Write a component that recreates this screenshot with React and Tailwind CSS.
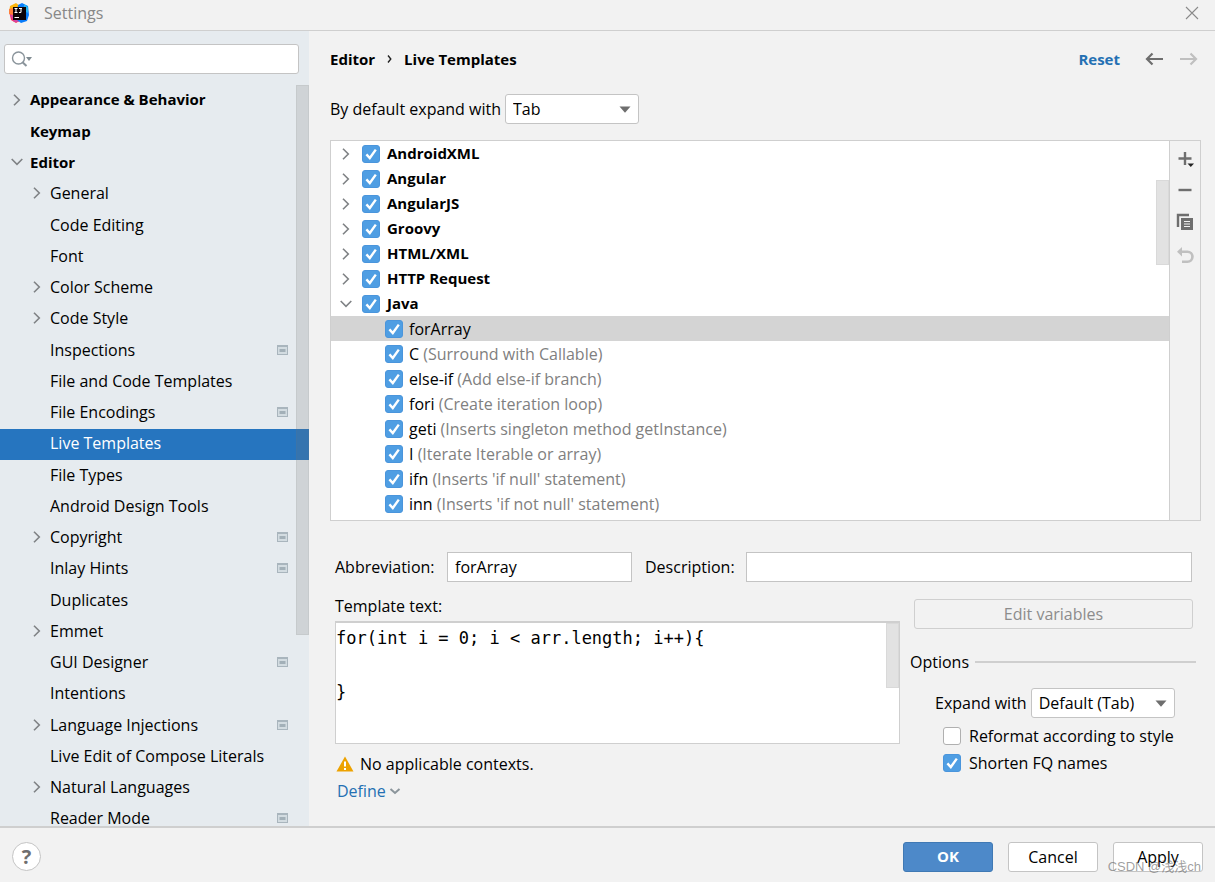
import React, { useState } from 'react';

const SETTINGS_TREE = [
  { label: 'Appearance & Behavior', level: 0, arrow: 'right' },
  { label: 'Keymap', level: 0 },
  { label: 'Editor', level: 0, arrow: 'down' },
  { label: 'General', level: 1, arrow: 'right' },
  { label: 'Code Editing', level: 1 },
  { label: 'Font', level: 1 },
  { label: 'Color Scheme', level: 1, arrow: 'right' },
  { label: 'Code Style', level: 1, arrow: 'right' },
  { label: 'Inspections', level: 1, project: true },
  { label: 'File and Code Templates', level: 1 },
  { label: 'File Encodings', level: 1, project: true },
  { label: 'Live Templates', level: 1 },
  { label: 'File Types', level: 1 },
  { label: 'Android Design Tools', level: 1 },
  { label: 'Copyright', level: 1, arrow: 'right', project: true },
  { label: 'Inlay Hints', level: 1, project: true },
  { label: 'Duplicates', level: 1 },
  { label: 'Emmet', level: 1, arrow: 'right' },
  { label: 'GUI Designer', level: 1, project: true },
  { label: 'Intentions', level: 1 },
  { label: 'Language Injections', level: 1, arrow: 'right', project: true },
  { label: 'Live Edit of Compose Literals', level: 1 },
  { label: 'Natural Languages', level: 1, arrow: 'right' },
  { label: 'Reader Mode', level: 1, project: true },
];

const GROUPS = ['AndroidXML', 'Angular', 'AngularJS', 'Groovy', 'HTML/XML', 'HTTP Request', 'Java'];

const TEMPLATES = [
  { name: 'forArray' },
  { name: 'C', hint: '(Surround with Callable)' },
  { name: 'else-if', hint: '(Add else-if branch)' },
  { name: 'fori', hint: '(Create iteration loop)' },
  { name: 'geti', hint: '(Inserts singleton method getInstance)' },
  { name: 'I', hint: '(Iterate Iterable or array)' },
  { name: 'ifn', hint: "(Inserts 'if null' statement)" },
  { name: 'inn', hint: "(Inserts 'if not null' statement)" },
];

function Chevron({ dir }) {
  return (
    <svg width="12" height="12" viewBox="0 0 12 12" fill="none" stroke="#7f8285" strokeWidth="1.6">
      {dir === 'down' ? <path d="M0.7 3 6 8.3 11.3 3" /> : <path d="M3 0.7 8.3 6 3 11.3" />}
    </svg>
  );
}

function Checkbox({ id, defaultChecked }) {
  return (
    <span className="relative flex size-[18px] shrink-0">
      <input
        id={id}
        type="checkbox"
        defaultChecked={defaultChecked}
        className="peer size-[18px] appearance-none rounded-[3px] border border-[#b0b0b0] bg-white checked:border-[#4a95dc] checked:bg-[#4f9ee3]"
      />
      <svg className="pointer-events-none absolute inset-0 hidden peer-checked:block" width="18" height="18" viewBox="0 0 18 18" fill="none" stroke="#fff" strokeWidth="2.4">
        <path d="M4.4 9.4 7.8 13 13.8 4.6" />
      </svg>
    </span>
  );
}

function Select({ id, className, options }) {
  return (
    <span className={`relative block ${className}`}>
      <select id={id} className="h-[30px] w-full appearance-none rounded-[3px] border border-[#c4c4c4] bg-white pl-[7px]">
        {options.map((option) => (
          <option key={option}>{option}</option>
        ))}
      </select>
      <svg className="pointer-events-none absolute top-3 right-2" width="12" height="7" viewBox="0 0 12 7">
        <path d="M0.5 0.5h11L6 6.8z" fill="#6e6e6e" />
      </svg>
    </span>
  );
}

function Logo() {
  return (
    <svg width="20" height="20" viewBox="0 0 20 20">
      <path d="M1 3 7 0 11 3 8 10 0 11z" fill="#fdb60d" />
      <path d="M0 8 5 7 12 17 7 20 2 17z" fill="#fe2857" />
      <path d="M1 12 6 10 10 19 5 19z" fill="#d4459c" />
      <path d="M9 2 13 0 19 3 20 12 18 18 12 20 8 17z" fill="#087cfa" />
      <path d="M15 1 19 4 19 10 15 8z" fill="#21b5f5" />
      <path d="M0 6 4 5 4 12 0 11z" fill="#ff7f3a" />
      <rect x="4" y="4" width="13" height="13" fill="#0b0306" />
      <path d="M5.5 5.5h3M7 5.5v4M5.5 9.5h3M10 5.5h3M12 5.5v3.2q0 1-2 .8" stroke="#fff" strokeWidth="1.1" fill="none" />
      <path d="M5.5 14.5h4.5" stroke="#fff" strokeWidth="1" />
    </svg>
  );
}

function ProjectIcon() {
  return (
    <svg width="11" height="10" viewBox="0 0 11 10">
      <path d="M0 0h11v10H0z" fill="#a9b5bd" />
      <path d="M1 2h9v7H1z" fill="#d3dce1" />
      <path d="M2.5 4h6v3h-6z" fill="#a3b0b8" />
    </svg>
  );
}

function Sidebar({ selected, onSelect }) {
  return (
    <aside className="flex w-[309px] shrink-0 flex-col bg-[#e6ebef]">
      <div className="pt-[13px] pr-[10px] pb-[11px] pl-1">
        <label className="flex h-[30px] items-center rounded-[3px] border border-[#c4c4c4] bg-white pl-[6px]">
          <svg width="22" height="18" viewBox="0 0 22 18" fill="none" stroke="#8a949b" strokeWidth="1.4">
            <circle cx="7.5" cy="8" r="6" />
            <path d="M11.5 12.2 15.5 16" strokeWidth="2" />
            <path d="M15 7h6l-3 4z" fill="#7f8b91" stroke="none" />
          </svg>
          <input type="text" aria-label="Search settings" className="min-w-0 flex-1 outline-none" />
        </label>
      </div>
      <nav className="relative min-h-0 flex-1 overflow-hidden">
        <ul className="grid h-[750px] grid-rows-[repeat(24,minmax(0,1fr))]">
          {SETTINGS_TREE.map((item) => (
            <li key={item.label} className="flex">
              <button
                type="button"
                onClick={() => onSelect(item.label)}
                className={`flex w-full items-center pr-[21px] pb-[2px] text-left ${item.level ? 'pl-[31px]' : 'pl-[11px] text-[15px] font-bold'} ${item.label === selected ? 'bg-[#2675bf] text-white' : ''}`}
              >
                <span className="w-[19px]">{item.arrow && <Chevron dir={item.arrow} />}</span>
                <span className="flex-1 whitespace-nowrap">{item.label}</span>
                {item.project && <ProjectIcon />}
              </button>
            </li>
          ))}
        </ul>
        <div className="absolute top-0 right-0 h-[550px] w-[13px] border border-[#73737318] bg-[#73737333]" />
      </nav>
    </aside>
  );
}

function TemplateList() {
  return (
    <div className="flex h-[381px] border border-[#cfcfcf]">
      <div className="relative min-w-0 flex-1 overflow-hidden bg-white">
        <ul>
          {GROUPS.map((name) => (
            <li key={name} className="flex h-[25px] items-center pl-[9px]">
              <button type="button" aria-label={`Toggle ${name}`} className="w-[22px]">
                <Chevron dir={name === 'Java' ? 'down' : 'right'} />
              </button>
              <Checkbox id={name} defaultChecked />
              <label htmlFor={name} className="pl-[7px] text-[15px] font-bold">{name}</label>
            </li>
          ))}
          {TEMPLATES.map(({ name, hint }) => (
            <li key={name} className={`flex h-[25px] items-center pl-[54px] ${name === 'forArray' ? 'bg-[#d4d4d4]' : ''}`}>
              <Checkbox id={name} defaultChecked />
              <label htmlFor={name} className="pl-[6px]">
                {name} {hint && <span className="text-[#808080]">{hint}</span>}
              </label>
            </li>
          ))}
        </ul>
        <div className="absolute top-[39px] right-0 h-[85px] w-[13px] border border-[#d9d9d9] bg-[#e2e2e2]" />
      </div>
      <div className="flex w-[31px] flex-col items-center gap-4 border-l border-[#cfcfcf] pt-[9px]">
        <button type="button" aria-label="Add">
          <svg width="18" height="17" viewBox="0 0 18 17">
            <path d="M2.5 8.5h13M9 2v13" stroke="#6e6e6e" strokeWidth="2.4" />
            <path d="M11.5 13.5h6.5l-3.2 3.5z" fill="#222" />
          </svg>
        </button>
        <button type="button" aria-label="Remove">
          <svg width="18" height="14" viewBox="0 0 18 14">
            <path d="M2.5 7h13" stroke="#6e6e6e" strokeWidth="2.4" />
          </svg>
        </button>
        <button type="button" aria-label="Duplicate">
          <svg width="18" height="18" viewBox="0 0 18 18">
            <path d="M2 14V2h11" stroke="#6e6e6e" strokeWidth="2.4" fill="none" />
            <path d="M5 5h12v12H5z" fill="#6e6e6e" />
            <path d="M8 8.5h6M8 11h6M8 13.5h6" stroke="#f2f2f2" strokeWidth="1" />
          </svg>
        </button>
        <button type="button" aria-label="Restore">
          <svg width="18" height="18" viewBox="0 0 18 18">
            <path d="M5 4.8h6.5a4.7 4.7 0 0 1 0 9.9H6" stroke="#c0c0c0" strokeWidth="2.6" fill="none" />
            <path d="M6 0v9.5L1 4.8z" fill="#c0c0c0" />
          </svg>
        </button>
      </div>
    </div>
  );
}

function TemplateForm() {
  return (
    <form className="pr-[9px] pl-[5px]">
      <div className="mt-[31px] flex items-center">
        <label htmlFor="abbreviation" className="w-[112px]">Abbreviation:</label>
        <input id="abbreviation" defaultValue="forArray" className="h-[30px] w-[185px] border border-[#c4c4c4] bg-white px-[7px]" />
        <label htmlFor="description" className="w-[114px] pl-[13px]">Description:</label>
        <input id="description" className="h-[30px] min-w-0 flex-1 border border-[#c4c4c4] bg-white px-[7px]" />
      </div>
      <div className="flex">
        <div className="min-w-0 flex-1">
          <label htmlFor="template" className="mt-3 block pb-[3px]">Template text:</label>
          <div className="relative">
            <textarea
              id="template"
              defaultValue={'for(int i = 0; i < arr.length; i++){\n\n\n}'}
              className="block h-[123px] w-full resize-none overflow-hidden border border-t-2 border-[#cfcfcf] bg-white pt-[6px] font-['DejaVu_Sans_Mono',monospace] text-[17px] leading-[18px] outline-none"
            />
            <div className="absolute top-[2px] right-px h-[65px] w-[13px] border border-[#d9d9d9] bg-[#e2e2e2]" />
          </div>
          <p className="mt-2 flex items-center gap-[6px] pl-px">
            <svg width="18" height="16" viewBox="0 0 18 16">
              <path d="M9 0.5 17.5 15.5H0.5z" fill="#eda200" />
              <path d="M9 5.5v5M9 12v2" stroke="#fff" strokeWidth="2" />
            </svg>
            No applicable contexts.
          </p>
          <button type="button" className="mt-[3px] flex items-center gap-[3px] pl-[2px] text-[#2470b3]">
            Define
            <svg width="12" height="12" viewBox="0 0 12 12" fill="none" stroke="#8b959b" strokeWidth="2">
              <path d="M1.5 4 6 8 10.5 4" />
            </svg>
          </button>
        </div>
        <div className="w-[292px] pl-[10px]">
          <button type="button" disabled className="mt-[17px] ml-1 h-[30px] w-[279px] rounded-[3px] border border-[#cfcfcf] text-[#8c8c8c]">
            Edit variables
          </button>
          <div role="group" aria-labelledby="optionsTitle">
            <div className="mt-[21px] -mr-1 flex items-center gap-[6px]">
              <span id="optionsTitle">Options</span>
              <span className="h-[2px] flex-1 bg-[#cfcfcf]" />
            </div>
            <div className="mt-[14px] flex items-center gap-1 pl-[25px]">
              <label htmlFor="expandWith">Expand with</label>
              <Select id="expandWith" className="w-[144px]" options={['Default (Tab)', 'Tab', 'Enter', 'Space']} />
            </div>
            <label className="mt-[6px] flex items-center gap-2 pl-[33px]">
              <Checkbox />
              Reformat according to style
            </label>
            <label className="mt-[3px] flex items-center gap-2 pl-[33px]">
              <Checkbox defaultChecked />
              Shorten FQ names
            </label>
          </div>
        </div>
      </div>
    </form>
  );
}

export default function App() {
  const [selected, setSelected] = useState('Live Templates');

  return (
    <div className="relative flex h-screen flex-col overflow-hidden bg-[#f2f2f2] font-['Open_Sans','Noto_Sans_CJK_SC',sans-serif] text-base text-black">
      <header className="flex h-[31px] shrink-0 items-center border-b border-[#cfcfcf] pr-4 pb-1 pl-[9px]">
        <Logo />
        <h1 className="flex-1 pl-[15px] text-[#888]">Settings</h1>
        <button type="button" aria-label="Close">
          <svg width="14" height="14" viewBox="0 0 14 14" stroke="#8a8a8a" strokeWidth="1.1">
            <path d="M1 1 13 13M13 1 1 13" />
          </svg>
        </button>
      </header>

      <div className="flex min-h-0 flex-1">
        <Sidebar selected={selected} onSelect={setSelected} />
        <main className="min-w-0 flex-1 pr-[14px] pl-[21px]">
          <div className="flex items-center pt-4 pr-[3px]">
            <h2 className="flex flex-1 items-center text-[15px] leading-6 font-bold">
              Editor
              <svg className="mx-3" width="5" height="8" viewBox="0 0 5 8" fill="none" stroke="#222" strokeWidth="1.4">
                <path d="M1 0.5 3.8 4 1 7.5" />
              </svg>
              Live Templates
            </h2>
            <a href="#reset" className="text-[15px] leading-6 font-bold text-[#2470b3]">Reset</a>
            <button type="button" aria-label="Back" className="ml-6">
              <svg width="20" height="14" viewBox="0 0 20 14" fill="none" stroke="#6e6e6e" strokeWidth="2.2">
                <path d="M19 7H3M8.5 1.5 3 7l5.5 5.5" />
              </svg>
            </button>
            <button type="button" aria-label="Forward" disabled className="ml-4">
              <svg width="18" height="14" viewBox="0 0 18 14" fill="none" stroke="#c0c0c0" strokeWidth="2.2">
                <path d="M0 7H16M10.5 1.5 16 7l-5.5 5.5" />
              </svg>
            </button>
          </div>
          <div className="mt-[23px] mb-4 flex items-center gap-1">
            <label htmlFor="defaultExpand">By default expand with</label>
            <Select id="defaultExpand" className="w-[134px]" options={['Tab', 'Enter', 'Space']} />
          </div>
          <TemplateList />
          <TemplateForm />
        </main>
      </div>

      <footer className="flex h-[56px] shrink-0 items-center gap-[15px] border-t-2 border-[#cfcfcf] pt-[3px] pr-[12px] pl-3">
        <button type="button" aria-label="Help" className="mr-auto flex size-[29px] items-center justify-center rounded-full border border-[#c4c4c4] bg-white text-xl font-bold text-[#6e6e6e]">
          ?
        </button>
        <button type="button" className="h-[30px] w-[90px] rounded-[3px] border border-[#4079b4] bg-[#4d89c9] text-[15px] font-bold text-white">OK</button>
        <button type="button" className="h-[30px] w-[90px] rounded-[3px] border border-[#c4c4c4] bg-white">Cancel</button>
        <button type="button" className="h-[30px] w-[90px] rounded-[3px] border border-[#c4c4c4] bg-white">Apply</button>
      </footer>
      <span className="absolute right-[14px] bottom-[6px] font-['Liberation_Sans','Noto_Sans_CJK_SC',sans-serif] text-[13px] text-[#666666a0]">CSDN @浅浅ch</span>
    </div>
  );
}
